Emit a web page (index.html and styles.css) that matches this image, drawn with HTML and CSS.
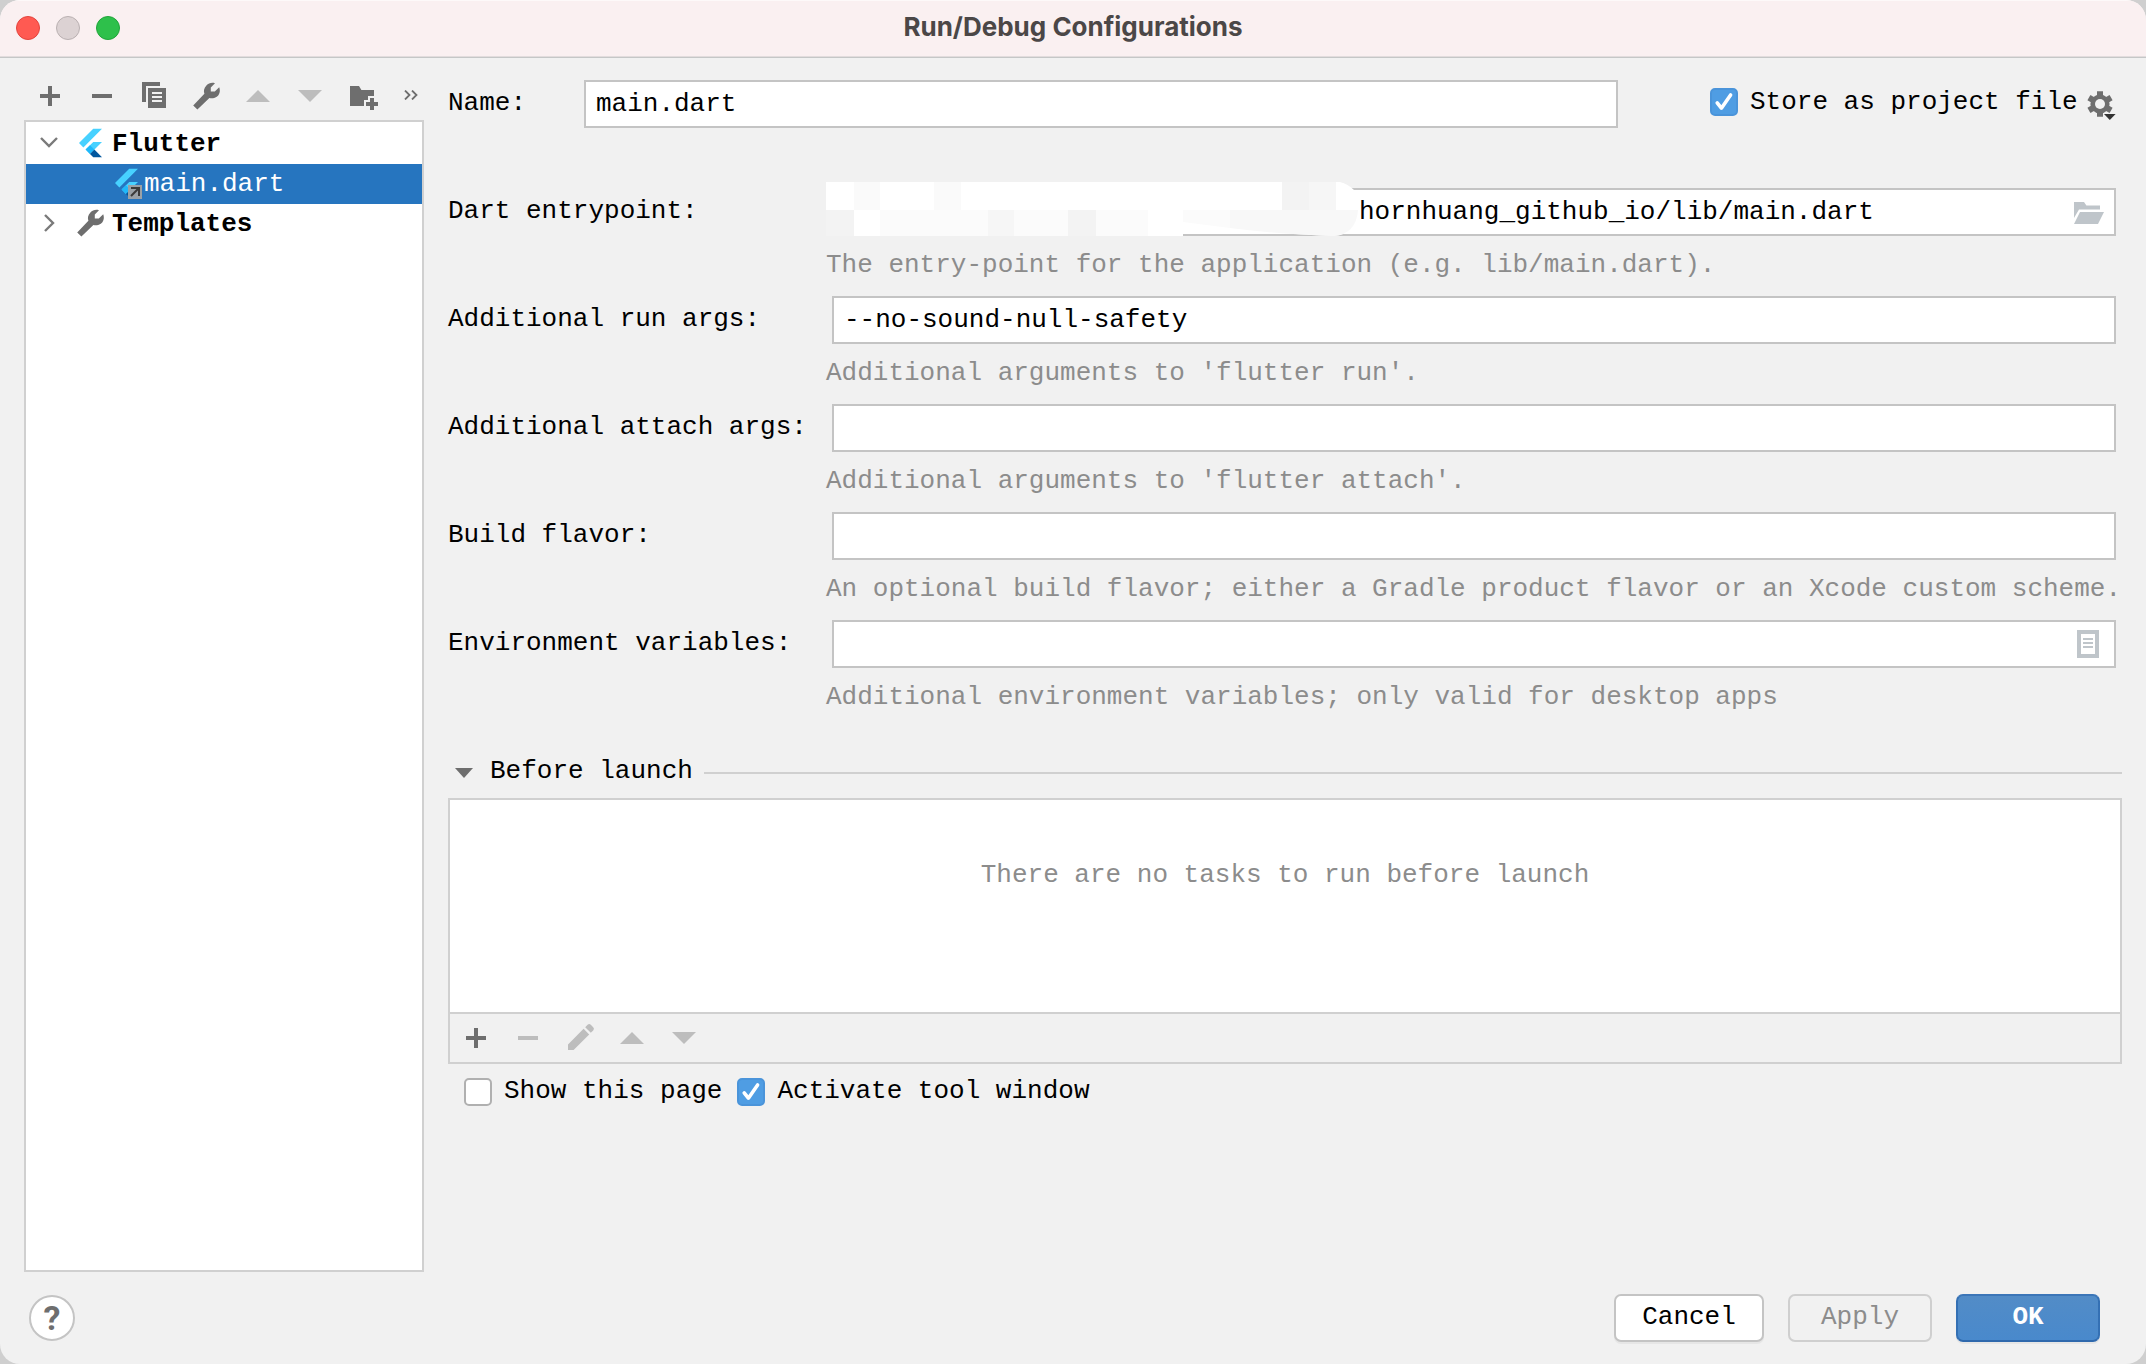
FILE: index.html
```
<!DOCTYPE html>
<html lang="en">
<head>
    <meta charset="UTF-8">
    <meta name="viewport" content="width=device-width, initial-scale=1.0">
    <title>Run/Debug Configurations</title>
    <link rel="stylesheet" href="styles.css">
</head>
<body>

<!-- Shared icons -->
<svg class="sprite" aria-hidden="true">
    <symbol id="plus" viewBox="0 0 16 16"><path d="M9 7h4v2H9v4H7V9H3V7h4V3h2z"/></symbol>
    <symbol id="minus" viewBox="0 0 16 16"><path d="M3 7h10v2H3z"/></symbol>
    <symbol id="up" viewBox="0 0 16 16"><path d="M8 5l6 6H2z"/></symbol>
    <symbol id="down" viewBox="0 0 16 16"><path d="M2 5h12l-6 6z"/></symbol>
    <symbol id="wrench" viewBox="0 0 16 16"><path d="M12.5 1.6L10.4 3.8V5.8H12.4L14.6 3.6C15.4 5.8 14.6 7.6 13.2 8.5C12.1 9.2 10.8 9.3 9.7 9L3.7 14.8 1.6 12.7 7.2 6.9C6.7 5.4 7 3.9 8.2 2.7C9.3 1.5 11 1.1 12.5 1.6z"/></symbol>
    <symbol id="check" viewBox="0 0 14 14"><path d="M3.6 7.4l2.1 2.7 4.6-6.6" fill="none" stroke="#fff" stroke-width="1.8" stroke-linecap="round" stroke-linejoin="round"/></symbol>
    <symbol id="flutter" viewBox="2.3 0 19.4 24">
        <path fill="#47d1ff" d="M14.314 0L2.3 12 6 15.7 21.684 0zM14.328 11.072L7.857 17.53 11.55 21.22 21.7 11.072z"/>
        <path fill="#1fb8fa" d="M11.55 13.84L7.857 17.53l3.693 3.69 3.69-3.69z"/>
        <path fill="#00569e" d="M11.55 21.22L14.33 24H21.7l-6.46-6.47z"/>
    </symbol>
</svg>

<div class="window">
    <div class="titlebar">
        <div class="lights">
            <span class="light close"></span>
            <span class="light minimize"></span>
            <span class="light zoom"></span>
        </div>
        <h1>Run/Debug Configurations</h1>
    </div>

    <div class="content">
        <div class="sidebar">
            <div class="toolbar">
                <svg class="icon"><use href="#plus"/></svg>
                <svg class="icon"><use href="#minus"/></svg>
                <svg class="icon" viewBox="0 0 16 16"><path d="M2 1h9v2H4v8H2z"/><path fill-rule="evenodd" d="M5 4h9v10H5zM7 6v1h5V6zM7 8v1h5V8zM7 10v1h5v-1z"/></svg>
                <svg class="icon"><use href="#wrench"/></svg>
                <svg class="icon disabled"><use href="#up"/></svg>
                <svg class="icon disabled"><use href="#down"/></svg>
                <svg class="icon" viewBox="0 0 16 16"><path d="M2 3h4.5l1.2 2H14v3h-3v2H9v3H2z"/><path d="M12 9h2v2h2v2h-2v2h-2v-2h-2v-2h2z"/></svg>
                <svg class="more" viewBox="0 0 14 10"><path d="M1 .5L5.5 5 1 9.5M8 .5L12.500 5 8 9.500"/></svg>
            </div>
            <div class="tree">
                <div class="node root">
                    <svg class="arrow" viewBox="0 0 18 18"><path d="M1 5l8 8 8-8"/></svg>
                    <svg class="flutter"><use href="#flutter"/></svg>
                    <span>Flutter</span>
                </div>
                <div class="node selected">
                    <div class="run-icon">
                        <svg class="flutter"><use href="#flutter"/></svg>
                        <svg class="badge" viewBox="0 0 14 14"><path fill="#9aa1a6" d="M0 0h14v14H0z"/><path d="M3 3h8v8M11 3l-8 8" fill="none" stroke="#3b3b3b" stroke-width="2"/></svg>
                    </div>
                    <span>main.dart</span>
                </div>
                <div class="node root">
                    <svg class="arrow" viewBox="0 0 18 18"><path d="M5 1l8 8-8 8"/></svg>
                    <svg class="icon"><use href="#wrench"/></svg>
                    <span>Templates</span>
                </div>
            </div>
        </div>

        <div class="editor">
            <div class="name-row">
                <label for="name">Name:</label>
                <input type="text" id="name" value="main.dart" spellcheck="false">
                <span class="checkbox checked"><svg><use href="#check"/></svg></span>
                <span class="store">Store as project file</span>
                <svg class="icon gear" viewBox="0 0 16 16">
                    <circle cx="8" cy="8" r="4.8"/>
                    <path d="M6.500 1.600h3v12.800h-3z"/>
                    <path d="M6.500 1.600h3v12.800h-3z" transform="rotate(60 8 8)"/>
                    <path d="M6.500 1.600h3v12.800h-3z" transform="rotate(120 8 8)"/>
                    <circle class="hole" cx="8" cy="8" r="2.500"/>
                    <path class="caret" d="M10 13h5.800L12.900 16z"/>
                </svg>
            </div>

            <div class="form">
                <label for="entry">Dart entrypoint:</label>
                <div class="field">
                    <input type="text" id="entry" class="path" value="hornhuang_github_io/lib/main.dart" spellcheck="false">
                    <svg class="icon inner" viewBox="0 0 16 16"><path d="M1 3h5l1.200 1.800H14v2H3.500L1 11z"/><path d="M4 8h12l-3 6H1z"/></svg>
                    <!-- Mosaic over the private part of the path -->
                    <svg class="mosaic" viewBox="0 0 534 54">
                        <path fill="#fff" d="M0 0H514Q522 2 528 8L532 28Q530 52 508 54Q450 52 357 41V54H0z"/>
                        <path fill="#fafafa" d="M28 0h26v28H28zM108 0h27v28h-27z"/>
                        <path fill="#f3f3f3" d="M0 28h28v26H0zM242 28h28v26h-28zM456 0h27v28h-27z"/>
                        <path fill="#f6f6f6" d="M483 0h27v28h-27zM162 28h26v26h-26z"/>
                        <path fill="#fbfbfb" d="M54 28h54v26H54zM108 28h54v26h-54zM188 28h54v26h-54zM270 28h26v26h-26zM296 28h26v26h-26zM357 28h47v18l-47-6z"/>
                        <path fill="#f8f8f8" d="M404 28H532Q530 52 508 54Q450 52 404 46z"/>
                    </svg>
                </div>
                <p class="help">The entry-point for the application (e.g. lib/main.dart).</p>

                <label for="run">Additional run args:</label>
                <div class="field">
                    <input type="text" id="run" value="--no-sound-null-safety" spellcheck="false">
                </div>
                <p class="help">Additional arguments to 'flutter run'.</p>

                <label for="attach">Additional attach args:</label>
                <div class="field">
                    <input type="text" id="attach">
                </div>
                <p class="help">Additional arguments to 'flutter attach'.</p>

                <label for="flavor">Build flavor:</label>
                <div class="field">
                    <input type="text" id="flavor">
                </div>
                <p class="help">An optional build flavor; either a Gradle product flavor or an Xcode custom scheme.</p>

                <label for="env">Environment variables:</label>
                <div class="field">
                    <input type="text" id="env">
                    <svg class="icon inner" viewBox="0 0 16 16"><path fill-rule="evenodd" d="M2.500 1h11v14h-11zM4.500 3v10h7V3z"/><path d="M5.500 5h5v1h-5zM5.500 7h5v1h-5zM5.500 9h5v1h-5z"/></svg>
                </div>
                <p class="help">Additional environment variables; only valid for desktop apps</p>
            </div>

            <div class="section-title">
                <svg viewBox="0 0 18 10"><path d="M0 0h18L9 10z"/></svg>
                <span>Before launch</span>
            </div>
            <div class="tasks">
                <div class="empty">There are no tasks to run before launch</div>
                <div class="task-bar">
                    <svg class="icon"><use href="#plus"/></svg>
                    <svg class="icon disabled"><use href="#minus"/></svg>
                    <svg class="icon disabled" viewBox="0 0 16 16"><path d="M9.800 3.400l2.800 2.800L4.800 14H2v-2.800zM10.600 2.600l1.200-1.200q.8-.8 1.600 0l1.200 1.200q.8.8 0 1.600l-1.200 1.200z"/></svg>
                    <svg class="icon disabled"><use href="#up"/></svg>
                    <svg class="icon disabled"><use href="#down"/></svg>
                </div>
            </div>
            <div class="options">
                <span class="checkbox"></span>
                <span class="option">Show this page</span>
                <span class="checkbox checked"><svg><use href="#check"/></svg></span>
                <span class="option">Activate tool window</span>
            </div>
        </div>
    </div>

    <div class="footer">
        <button class="help-btn">?</button>
        <button class="btn cancel">Cancel</button>
        <button class="btn apply" disabled>Apply</button>
        <button class="btn ok">OK</button>
    </div>
</div>

</body>
</html>
```
FILE: styles.css
```
* {
    box-sizing: border-box;
}
body {
    margin: 0;
    background-color: #cfcfcf;
    font-family: "Liberation Mono", "Courier New", monospace;
    font-size: 26px;
    color: #000;
}
input, button {
    font-family: inherit;
    font-size: inherit;
}
.sprite {
    display: none;
}
.window {
    width: 2146px;
    height: 1364px;
    display: flex;
    flex-direction: column;
    background-color: #f1f1f1;
    border-radius: 20px;
    overflow: hidden;
}

/* Title bar */
.titlebar {
    height: 58px;
    display: grid;
    grid-template-columns: 1fr auto 1fr;
    align-items: center;
    padding: 0 16px 2px;
    background-color: #faf0f1;
    border-bottom: 1px solid #c5c7c7;
    box-shadow: inset 0 -1px #e2dcdd, inset 0 1px #fdf9f9;
}
.titlebar h1 {
    margin: 0 0 2px;
    font-family: Inter, sans-serif;
    font-size: 26px;
    font-weight: 700;
    line-height: 32px;
    color: #4b4747;
}
.lights {
    display: flex;
    gap: 16px;
}
.light {
    width: 24px;
    height: 24px;
    border-radius: 50%;
    border: 1px solid;
}
.close {
    background-color: #ff5a52;
    border-color: #e2443d;
}
.minimize {
    background-color: #dcd2d3;
    border-color: #b9b0b1;
}
.zoom {
    background-color: #2ec04b;
    border-color: #20a43a;
}

/* Icons */
.icon {
    width: 32px;
    height: 32px;
    flex: none;
    fill: #6e6e6e;
}
.icon.disabled {
    fill: #bdbdbd;
}
.flutter {
    width: 23px;
    height: 30px;
    flex: none;
}

/* Left side */
.content {
    flex: 1;
    display: flex;
    gap: 24px;
    padding: 0 24px;
}
.sidebar {
    width: 400px;
    display: flex;
    flex-direction: column;
}
.toolbar {
    height: 62px;
    display: flex;
    gap: 20px;
    padding: 22px 0 0 10px;
}
.more {
    width: 14px;
    height: 10px;
    margin: 10px 0 0 6px;
    fill: none;
    stroke: #6e6e6e;
    stroke-width: 1.8;
}
.tree {
    flex: 1;
    background-color: #fff;
    border: 2px solid #d0d0d0;
}
.node {
    height: 40px;
    display: flex;
    align-items: center;
    padding-bottom: 2px;
    white-space: nowrap;
}
.node span {
    margin-top: 1px;
}
.node.root {
    padding-left: 14px;
    font-weight: bold;
}
.node:first-child {
    height: 42px;
}
.node:first-child span {
    margin-top: 3px;
}
.root .arrow {
    width: 18px;
    height: 18px;
    margin-right: 21px;
    fill: none;
    stroke: #7a7a7a;
    stroke-width: 2.4;
}
.root .flutter {
    margin: 2px 10px 0 0;
}
.root .icon {
    margin: 0 6px 0 -5px;
}
.node.selected {
    background-color: #2675bf;
    color: #fff;
    padding-left: 89px;
}
.run-icon {
    position: relative;
    width: 29px;
    height: 30px;
}
.run-icon .badge {
    position: absolute;
    left: 13px;
    top: 17px;
    width: 14px;
    height: 14px;
}

/* Right side */
.editor {
    width: 1674px;
}
.name-row {
    height: 48px;
    display: flex;
    align-items: center;
    margin-top: 22px;
}
label {
    line-height: 47px;
    white-space: nowrap;
}
.name-row label {
    width: 136px;
    height: 48px;
}
input {
    width: 100%;
    height: 48px;
    padding: 0 10px 1px;
    border: 2px solid #c4c4c4;
    border-radius: 0;
    background-color: #fff;
    color: #000;
    outline: none;
}
.name-row input {
    width: 1034px;
    margin-right: 92px;
    padding-left: 10px;
}
.checkbox {
    width: 28px;
    height: 28px;
    flex: none;
    border: 2px solid #b0b0b0;
    border-radius: 5px;
    background-color: #fff;
}
.checkbox.checked {
    border-color: #4a94da;
    background-color: #4f9de3;
}
.checkbox svg {
    display: block;
    width: 28px;
    height: 28px;
    margin: -2px;
}
.name-row .checkbox {
    margin-top: -4px;
}
.store {
    margin: -4px 6px 0 12px;
    white-space: nowrap;
}
.gear .hole {
    fill: #f1f1f1;
}
.gear .caret {
    fill: #333;
}

.form {
    display: grid;
    grid-template-columns: 378px 1fr;
    grid-auto-rows: 48px 60px;
    margin-top: 60px;
}
.field {
    position: relative;
    width: 1284px;
    margin-left: 6px;
}
.field .path {
    padding-left: 525px;
}
.inner {
    position: absolute;
    right: 12px;
    top: 8px;
    fill: #bfc5ca;
}
.mosaic {
    position: absolute;
    left: -6px;
    top: -6px;
    width: 534px;
    height: 54px;
}
.help {
    grid-column: 2;
    margin: 0;
    line-height: 59px;
    color: #8c8c8c;
    white-space: nowrap;
}

.section-title {
    height: 42px;
    display: flex;
    align-items: center;
    margin-top: 24px;
    padding-left: 7px;
    line-height: 32px;
    white-space: nowrap;
}
.section-title svg {
    width: 18px;
    height: 10px;
    margin-right: 17px;
    fill: #6e6e6e;
}
.section-title span {
    margin-top: -4px;
}
.section-title::after {
    content: "";
    flex: 1;
    height: 2px;
    margin-left: 11px;
    background-color: #d0d0d0;
}
.tasks {
    height: 266px;
    margin-top: 4px;
    border: 2px solid #d0d0d0;
}
.empty {
    height: 212px;
    padding-top: 59px;
    background-color: #fff;
    line-height: 32px;
    text-align: center;
    color: #8c8c8c;
}
.task-bar {
    height: 50px;
    display: flex;
    gap: 20px;
    padding: 8px 0 0 10px;
    border-top: 2px solid #d0d0d0;
}
.options {
    display: flex;
    align-items: center;
    margin-top: 11px;
    padding-left: 16px;
}
.option {
    margin: 0 15px 2px 12px;
    line-height: 32px;
}

/* Footer */
.footer {
    height: 92px;
    display: flex;
    align-items: center;
    gap: 24px;
    padding: 0 46px 0 29px;
}
.help-btn {
    width: 46px;
    height: 46px;
    margin-right: auto;
    padding: 0;
    border: 2px solid #c4c4c4;
    border-radius: 50%;
    background-color: #fff;
    font-family: Roboto, sans-serif;
    font-size: 34px;
    font-weight: bold;
    line-height: 42px;
    color: #6e6e6e;
}
.btn {
    width: 144px;
    height: 48px;
    padding: 0 0 2px;
    border: 2px solid #c4c4c4;
    border-radius: 7px;
    background-color: #fff;
    box-shadow: 0 2px #e6e6e6;
    color: #000;
}
.cancel {
    width: 150px;
}
.apply {
    border-color: #cfcfcf;
    background-color: #f1f1f1;
    box-shadow: none;
    color: #8c8c8c;
}
.ok {
    border-color: #3c76b8 #3470b4 #2f69ad;
    background: linear-gradient(#528cc7, #4989cc);
    font-weight: bold;
    color: #fff;
}
```
